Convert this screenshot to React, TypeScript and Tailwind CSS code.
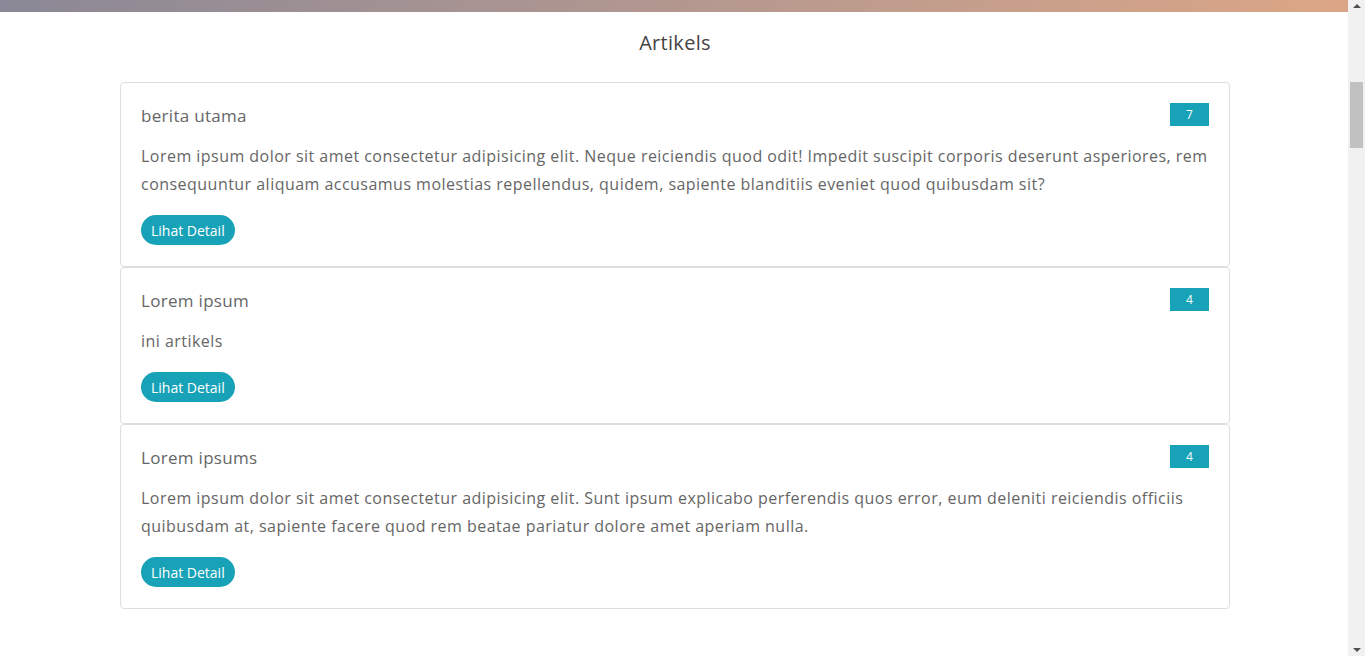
import React from "react";

const items = [
  {
    title: "berita utama",
    count: 7,
    body: "Lorem ipsum dolor sit amet consectetur adipisicing elit. Neque reiciendis quod odit! Impedit suscipit corporis deserunt asperiores, rem consequuntur aliquam accusamus molestias repellendus, quidem, sapiente blanditiis eveniet quod quibusdam sit?",
  },
  { title: "Lorem ipsum", count: 4, body: "ini artikels" },
  {
    title: "Lorem ipsums",
    count: 4,
    body: "Lorem ipsum dolor sit amet consectetur adipisicing elit. Sunt ipsum explicabo perferendis quos error, eum deleniti reiciendis officiis quibusdam at, sapiente facere quod rem beatae pariatur dolore amet aperiam nulla.",
  },
];

export default function App() {
  return (
    <div
      className="flex h-[656px] w-[1365px] overflow-hidden bg-white text-[#666]"
      style={{ fontFamily: '"Open Sans", "Noto Sans", sans-serif' }}
    >
      <div className="flex w-[1348px] flex-col">
        <div className="h-[12px] w-full bg-gradient-to-r from-[#8a8896] to-[#dca686]" />
        <h1 className="mt-[18px] pl-[2px] text-center text-[20px] leading-[26px] tracking-[0.3px] text-[#444]">Artikels</h1>
        <div className="ml-[120px] mt-[26px] flex w-[1110px] flex-col">
          {items.map((it, i) => (
            <div
              key={i}
              className="rounded-[4px] border border-[#dedede] px-[20px] pb-[21px] pt-[20px]"
            >
              <div className="flex items-start justify-between">
                <div className="text-[17px] leading-[26px] tracking-[0.3px] text-[#666]">{it.title}</div>
                <span className="flex h-[23px] w-[39px] items-center justify-center bg-[#17a2b8] text-[12px] text-white">
                  {it.count}
                </span>
              </div>
              <p className="mt-[13px] text-[16px] leading-[28px] tracking-[0.47px] text-[#666]">{it.body}</p>
              <button className="mt-[17px] h-[30px] rounded-full bg-[#17a2b8] px-[10px] text-[14px] font-medium text-white">
                Lihat Detail
              </button>
            </div>
          ))}
        </div>
      </div>
      <div className="flex w-[17px] flex-col items-center bg-[#f1f1f1]">
        <div className="mt-[4px] h-0 w-0 border-x-[4px] border-b-[4px] border-x-transparent border-b-[#505050]" />
        <div className="mt-[74px] h-[66px] w-[13px] bg-[#c1c1c1]" />
        <div className="flex-1" />
        <div className="mb-[4px] h-0 w-0 border-x-[4px] border-t-[4px] border-x-transparent border-t-[#505050]" />
      </div>
    </div>
  );
}
